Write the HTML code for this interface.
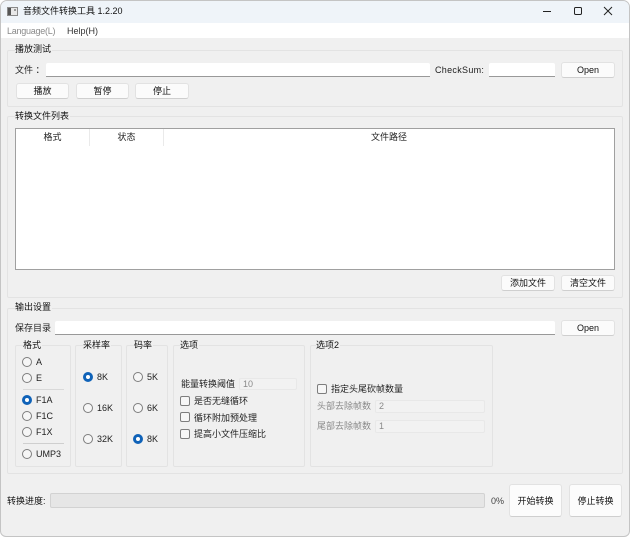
<!DOCTYPE html>
<html><head><meta charset="utf-8">
<style>
html,body{margin:0;padding:0;width:630px;height:537px;overflow:hidden;background:#fff}
#w{position:absolute;left:0;top:0;width:630px;height:537px;background:#f0f0f0;font:9px "Liberation Sans","Noto Sans CJK SC",sans-serif;color:#111;box-sizing:border-box;border:1px solid #c4c4c4;border-radius:7px 7px 6px 6px;overflow:hidden}
.a{position:absolute;white-space:nowrap}
#in{position:absolute;left:-1px;top:-1px;width:630px;height:537px;filter:blur(.3px)}
.g{position:absolute;box-sizing:border-box;border:1px solid #e3e3e3;border-radius:2px}
.t{position:absolute;background:#f0f0f0;padding:0 1px 0 0;white-space:nowrap;line-height:12px;height:12px;color:#111}
.b{position:absolute;box-sizing:border-box;background:#fbfbfb;border:1px solid #e2e2e2;border-bottom-color:#cfcfcf;border-radius:3px;text-align:center;color:#111}
.i{position:absolute;box-sizing:border-box;background:#fff;border-bottom:1px solid #999;border-radius:2px 2px 0 0}
.d{position:absolute;box-sizing:border-box;background:#f2f2f2;border:1px solid #e8e8e8;border-radius:2px;color:#8a8a8a;padding-left:3px;line-height:11px;font-size:9px}
.r{position:absolute;width:10px;height:10px;box-sizing:border-box;border:1px solid #7d7d7d;border-radius:50%;background:#f6f6f6}
.r.on{border:3px solid #0f62b8;background:#fff}
.c{position:absolute;width:10px;height:10px;box-sizing:border-box;border:1px solid #7d7d7d;border-radius:2px;background:#f6f6f6}
.l{position:absolute;white-space:nowrap;line-height:12px;color:#222}
.s{position:absolute;height:1px;background:#cfcfcf}
</style></head><body>
<div id="w"><div id="in">
<div class="a" style="left:0;top:0;width:630px;height:23px;background:#eff4f9"></div>
<div class="a" style="left:0;top:23px;width:630px;height:15px;background:#fff"></div>

<svg class="a" style="left:7px;top:6px" width="11" height="11"><rect x="0.5" y="1.5" width="10" height="8" fill="#e8e8e8" stroke="#8a8a8a"/><rect x="1" y="2" width="3" height="7" fill="#555"/><rect x="7" y="3" width="2" height="2" fill="#999"/></svg>
<div class="a" style="left:23px;top:5px;font-size:9px;line-height:13px;color:#111">音频文件转换工具 1.2.20</div>
<svg class="a" style="left:540px;top:3px" width="85" height="16" fill="none" stroke="#222"><path d="M3 8.5H11" stroke-width="1"/><rect x="34.5" y="4.5" width="7" height="7" rx="1.2" stroke-width="1"/><path d="M64 4L72 12M72 4L64 12" stroke-width="1"/></svg>

<div class="a" style="left:7px;top:25px;line-height:12px;color:#8a8a8a;letter-spacing:-.25px">Language(L)</div>
<div class="a" style="left:67px;top:25px;line-height:12px;color:#333">Help(H)</div>

<div class="g" style="left:7px;top:50px;width:616px;height:57px"></div>
<div class="t" style="left:15px;top:43px">播放测试</div>
<div class="l" style="left:15px;top:64px">文件 ：</div>
<div class="i" style="left:46px;top:63px;width:384px;height:14px"></div>
<div class="l" style="left:435px;top:64px;letter-spacing:.3px">CheckSum:</div>
<div class="i" style="left:489px;top:63px;width:66px;height:14px"></div>
<div class="b" style="left:561px;top:62px;width:54px;height:16px;line-height:15px">Open</div>
<div class="b" style="left:16px;top:83px;width:53px;height:16px;line-height:15px">播放</div>
<div class="b" style="left:76px;top:83px;width:53px;height:16px;line-height:15px">暂停</div>
<div class="b" style="left:135px;top:83px;width:54px;height:16px;line-height:15px">停止</div>

<div class="g" style="left:7px;top:116px;width:616px;height:182px"></div>
<div class="t" style="left:15px;top:110px">转换文件列表</div>
<div class="a" style="left:15px;top:128px;width:600px;height:142px;box-sizing:border-box;background:#fff;border:1px solid #a0a0a0"></div>
<div class="a" style="left:89px;top:129px;width:1px;height:17px;background:#eaeaea"></div>
<div class="a" style="left:163px;top:129px;width:1px;height:17px;background:#eaeaea"></div>
<div class="l" style="left:16px;width:73px;text-align:center;top:131px">格式</div>
<div class="l" style="left:90px;width:73px;text-align:center;top:131px">状态</div>
<div class="l" style="left:164px;width:450px;text-align:center;top:131px">文件路径</div>
<div class="b" style="left:501px;top:275px;width:54px;height:16px;line-height:15px">添加文件</div>
<div class="b" style="left:561px;top:275px;width:54px;height:16px;line-height:15px">清空文件</div>

<div class="g" style="left:7px;top:308px;width:616px;height:166px"></div>
<div class="t" style="left:15px;top:301px">输出设置</div>
<div class="l" style="left:15px;top:322px">保存目录</div>
<div class="i" style="left:55px;top:321px;width:500px;height:14px"></div>
<div class="b" style="left:561px;top:320px;width:54px;height:16px;line-height:15px">Open</div>

<div class="g" style="left:15px;top:345px;width:56px;height:122px"></div>
<div class="t" style="left:23px;top:339px">格式</div>
<div class="r" style="left:22px;top:357px"></div><div class="l" style="left:36px;top:356px">A</div>
<div class="r" style="left:22px;top:373px"></div><div class="l" style="left:36px;top:372px">E</div>
<div class="s" style="left:23px;top:389px;width:41px;background:#d9d9d9"></div>
<div class="r on" style="left:22px;top:395px"></div><div class="l" style="left:36px;top:394px">F1A</div>
<div class="r" style="left:22px;top:411px"></div><div class="l" style="left:36px;top:410px">F1C</div>
<div class="r" style="left:22px;top:427px"></div><div class="l" style="left:36px;top:426px">F1X</div>
<div class="s" style="left:23px;top:443px;width:41px"></div>
<div class="r" style="left:22px;top:449px"></div><div class="l" style="left:36px;top:448px">UMP3</div>

<div class="g" style="left:75px;top:345px;width:47px;height:122px"></div>
<div class="t" style="left:83px;top:339px">采样率</div>
<div class="r on" style="left:83px;top:372px"></div><div class="l" style="left:97px;top:371px">8K</div>
<div class="r" style="left:83px;top:403px"></div><div class="l" style="left:97px;top:402px">16K</div>
<div class="r" style="left:83px;top:434px"></div><div class="l" style="left:97px;top:433px">32K</div>

<div class="g" style="left:126px;top:345px;width:42px;height:122px"></div>
<div class="t" style="left:134px;top:339px">码率</div>
<div class="r" style="left:133px;top:372px"></div><div class="l" style="left:147px;top:371px">5K</div>
<div class="r" style="left:133px;top:403px"></div><div class="l" style="left:147px;top:402px">6K</div>
<div class="r on" style="left:133px;top:434px"></div><div class="l" style="left:147px;top:433px">8K</div>

<div class="g" style="left:173px;top:345px;width:132px;height:122px"></div>
<div class="t" style="left:180px;top:339px">选项</div>
<div class="l" style="left:181px;top:378px">能量转换阈值</div>
<div class="d" style="left:239px;top:378px;width:58px;height:12px">10</div>
<div class="c" style="left:180px;top:396px"></div><div class="l" style="left:194px;top:395px">是否无缝循环</div>
<div class="c" style="left:180px;top:412px"></div><div class="l" style="left:194px;top:412px">循环附加预处理</div>
<div class="c" style="left:180px;top:429px"></div><div class="l" style="left:194px;top:428px">提高小文件压缩比</div>

<div class="g" style="left:310px;top:345px;width:183px;height:122px"></div>
<div class="t" style="left:316px;top:339px">选项2</div>
<div class="c" style="left:317px;top:384px"></div><div class="l" style="left:331px;top:383px">指定头尾砍帧数量</div>
<div class="l" style="left:317px;top:400px;color:#8a8a8a">头部去除帧数</div>
<div class="d" style="left:375px;top:400px;width:110px;height:13px">2</div>
<div class="l" style="left:317px;top:420px;color:#8a8a8a">尾部去除帧数</div>
<div class="d" style="left:375px;top:420px;width:110px;height:13px">1</div>

<div class="l" style="left:7px;top:495px;color:#111">转换进度:</div>
<div class="a" style="left:50px;top:493px;width:435px;height:15px;box-sizing:border-box;background:#e6e6e6;border:1px solid #d2d2d2;border-radius:2px"></div>
<div class="l" style="left:491px;top:495px;color:#444">0%</div>
<div class="b" style="left:509px;top:484px;width:53px;height:33px;line-height:32px;color:#111;background:#fcfcfc">开始转换</div>
<div class="b" style="left:569px;top:484px;width:53px;height:33px;line-height:32px;color:#111;background:#fcfcfc">停止转换</div>
</div></div>
</body></html>
